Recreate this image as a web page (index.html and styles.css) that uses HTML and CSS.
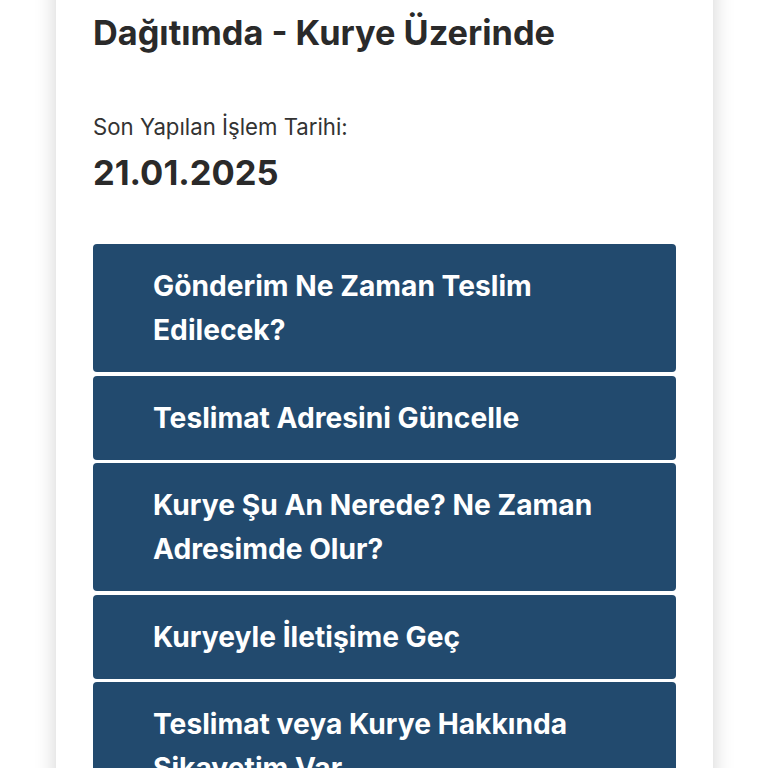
FILE: index.html
```html
<!DOCTYPE html>
<html lang="tr">
<head>
    <meta charset="UTF-8">
    <meta name="viewport" content="width=device-width, initial-scale=1.0">
    <title>Gönderi Takip</title>
    <link rel="stylesheet" href="styles.css">
</head>
<body>
    <div class="card">
        <!-- durum -->
        <h2 class="status">Dağıtımda - Kurye Üzerinde</h2>

        <p class="label">Son Yapılan İşlem Tarihi:</p>
        <p class="value">21.01.2025</p>

        <!-- sorular -->
        <div class="actions">
            <button class="action">Gönderim Ne Zaman Teslim Edilecek?</button>
            <button class="action">Teslimat Adresini Güncelle</button>
            <button class="action">Kurye Şu An Nerede? Ne Zaman Adresimde Olur?</button>
            <button class="action">Kuryeyle İletişime Geç</button>
            <button class="action">Teslimat veya Kurye Hakkında Şikayetim Var</button>
        </div>
    </div>
</body>
</html>
```

FILE: styles.css
```css
body {
    margin: 0;
    background: #fff;
    font-family: Inter, "Liberation Sans", Arial, sans-serif;
    color: #2a2a2a;
    overflow: hidden;
}
.card {
    width: 657px;
    box-sizing: border-box;
    margin: -40px auto 0 56px;
    padding: 51px 37px 200px;
    background: #fff;
    box-shadow: 0 0 20px rgba(0,0,0,0.18);
}
.status {
    margin: 0;
    font-size: 34.3px;
    line-height: 44px;
    font-weight: 700;
}
.label {
    margin: 57px 0 0;
    font-size: 22.2px;
    line-height: 30px;
    color: #333;
}
.value {
    margin: 10px 0 0;
    font-size: 34.5px;
    line-height: 42px;
    font-weight: 700;
}
.actions {
    margin-top: 50px;
    display: flex;
    flex-direction: column;
    gap: 3.5px;
}
.action {
    display: block;
    width: 100%;
    text-align: left;
    padding: 20px 60px;
    border: none;
    border-radius: 4px;
    background: #224a6e;
    color: #fff;
    font-family: inherit;
    font-size: 28.2px;
    line-height: 44px;
    font-weight: 700;
    cursor: pointer;
}
```
